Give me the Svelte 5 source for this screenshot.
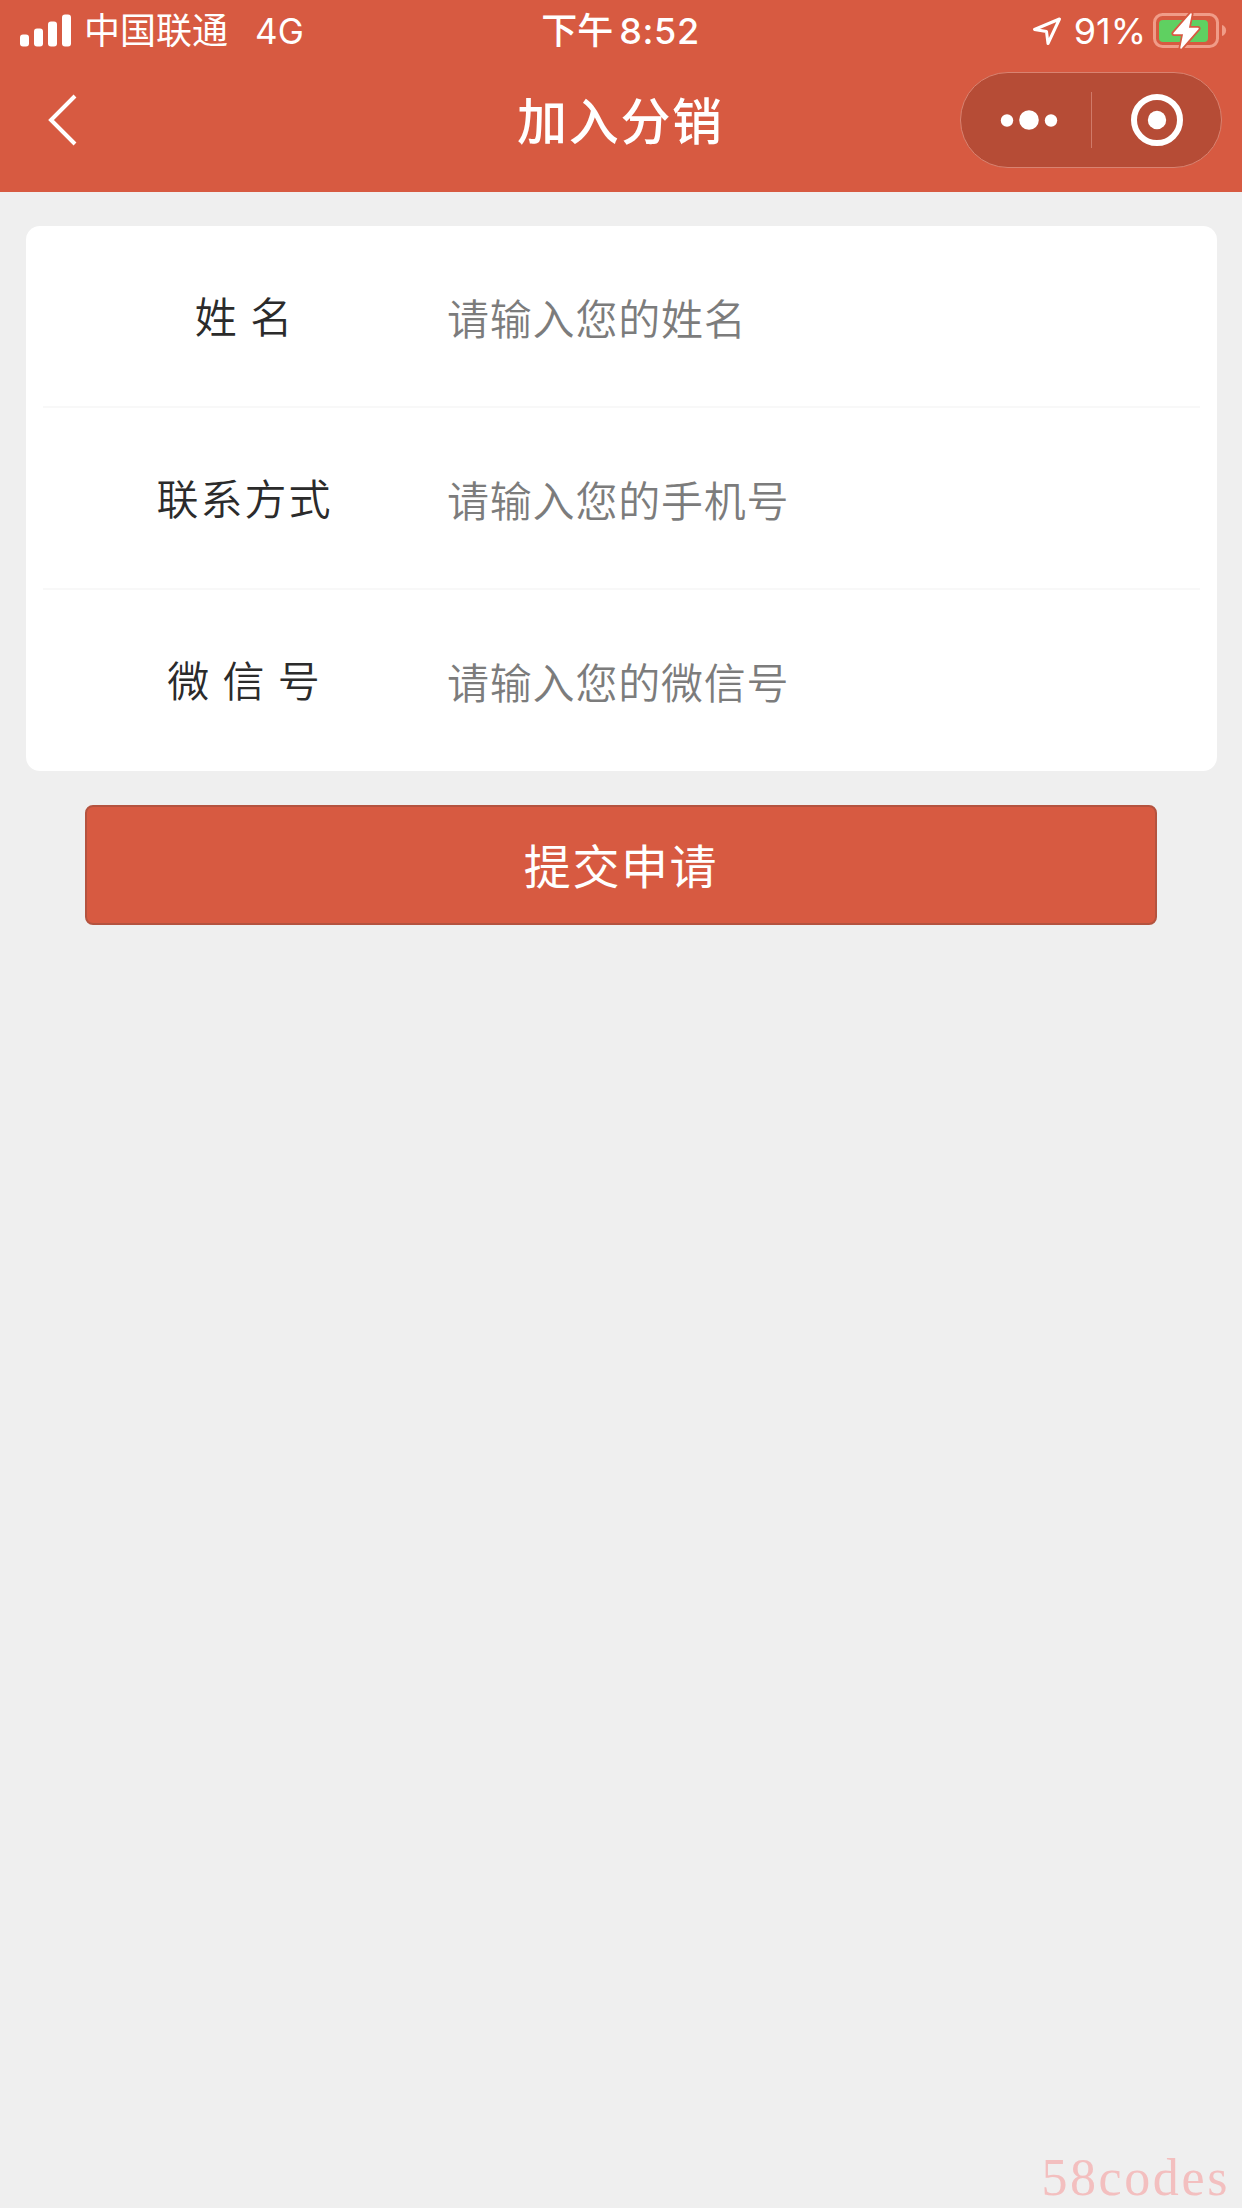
<script lang="ts">
  let fields = $state([
    { name: 'realname', label: '姓 名', placeholder: '请输入您的姓名', value: '' },
    { name: 'mobile', label: '联系方式', placeholder: '请输入您的手机号', value: '' },
    { name: 'wechat', label: '微 信 号', placeholder: '请输入您的微信号', value: '' }
  ]);
</script>

<div class="page">
  <header>
    <div class="status">
      <div class="carrier">
        <svg class="signal" width="52" height="34" viewBox="0 0 52 34" fill="#fff">
          <rect x="0" y="20.5" width="9" height="12" rx="3" />
          <rect x="14" y="14.5" width="9" height="18" rx="3" />
          <rect x="28" y="7.5" width="9" height="25" rx="3" />
          <rect x="42" y="0.5" width="9" height="32" rx="3" />
        </svg>
        <span>中国联通</span>
        <span class="network">4G</span>
      </div>
      <div class="time"><span>下午</span><span class="clock">8:52</span></div>
      <div class="power">
        <svg class="locate" width="30" height="30" viewBox="0 0 30 30" fill="none" stroke="#fff" stroke-width="3" stroke-linejoin="round">
          <path d="M27.5 3 L2.5 13.5 L14.5 15.5 L16 27.5 Z" />
        </svg>
        <span>91%</span>
        <svg class="battery" width="76" height="38" viewBox="0 0 76 38">
          <rect x="1.5" y="2.5" width="63" height="32" rx="8" fill="none" stroke="#f09c88" stroke-width="3" />
          <path d="M69 13 C74.5 14.5 74.5 22.5 69 24 Z" fill="#f09c88" />
          <rect x="6" y="8" width="49" height="22" rx="4" fill="#5fd061" />
          <path d="M38 2 L21 21.5 H31 L28 36 L45 16.5 H35 Z" fill="#fff" stroke="#d75a41" stroke-width="5" stroke-linejoin="round" />
          <path d="M38 2 L21 21.5 H31 L28 36 L45 16.5 H35 Z" fill="#fff" stroke="#fff" stroke-width="1.5" stroke-linejoin="round" />
        </svg>
      </div>
    </div>

    <div class="nav">
      <button class="back" aria-label="返回">
        <svg width="30" height="54" viewBox="0 0 30 54" fill="none" stroke="#fff" stroke-width="4">
          <path d="M27 3 L3 27 L27 51" />
        </svg>
      </button>
      <h1>加入分销</h1>
      <div class="capsule">
        <svg width="260" height="94" viewBox="0 0 260 94" fill="#fff">
          <circle cx="46" cy="47.5" r="6.2" />
          <circle cx="68" cy="47" r="9.8" />
          <circle cx="90" cy="47.5" r="6.2" />
          <rect x="130" y="19" width="1" height="56" fill="#d07a69" />
          <circle cx="196" cy="47" r="23" fill="none" stroke="#fff" stroke-width="6" />
          <circle cx="196" cy="47" r="9.2" />
        </svg>
      </div>
    </div>
  </header>

  <form>
    <div class="card">
      {#each fields as field}
        <label class="row">
          <span class="label">{field.label}</span>
          <input name={field.name} placeholder={field.placeholder} bind:value={field.value} />
        </label>
      {/each}
    </div>
    <button type="button" class="submit">提交申请</button>
  </form>

  <footer>58codes</footer>
</div>

<style>
  :global(body) { background: #efefef; }
  .page {
    box-sizing: border-box;
    width: 1242px;
    height: 2208px;
    display: flex;
    flex-direction: column;
    overflow: hidden;
    background: #efefef;
    font-family: 'Noto Sans CJK SC', sans-serif;
  }
  header { height: 192px; background: #d75a41; color: #fff; }
  svg { display: block; flex: none; }

  .status {
    display: grid;
    grid-template-columns: 1fr auto 1fr;
    align-items: center;
    height: 62px;
    padding: 0 13px 0 20px;
    font-family: Inter, 'Noto Sans CJK SC', sans-serif;
    font-size: 36px;
    line-height: 62px;
    white-space: nowrap;
  }
  .carrier, .time, .power { display: flex; align-items: center; }
  .signal { margin-right: 12px; }
  .network { margin-left: 27px; font-size: 35px; }
  .time { margin-right: 8px; font-weight: 500; }
  .clock { margin-left: 6px; font-size: 36px; letter-spacing: 0.6px; }
  .power { justify-content: flex-end; font-size: 36px; }
  .locate { margin-right: 12px; }
  .battery { margin-left: 7px; }

  .nav {
    display: grid;
    grid-template-columns: 469px auto 1fr;
    align-items: center;
    height: 116px;
    padding: 0 20px 0 48px;
  }
  .back { justify-self: start; border: 0; padding: 0; background: none; }
  h1 { margin: 0 0 4px; font-size: 50px; font-weight: 500; letter-spacing: 1.7px; line-height: 72px; }
  .capsule {
    justify-self: end;
    border: 1px solid #d98371;
    border-radius: 48px;
    background: #b64c36;
  }

  form { flex: 1; padding: 34px 25px 0 26px; }
  .card { padding: 0 17px; border-radius: 14px; background: #fff; }
  .row {
    box-sizing: border-box;
    display: flex;
    align-items: center;
    height: 182px;
    padding-bottom: 4px;
    border-bottom: 2px solid #f8f8f8;
    font-size: 42px;
    font-weight: 350;
  }
  .row:last-child { height: 181px; padding-bottom: 5px; border-bottom: 0; }
  .label { width: 404px; color: #2b2b2b; letter-spacing: 2px; text-align: center; text-indent: -1px; white-space: pre; }
  input {
    flex: 1;
    min-width: 0;
    height: 80px;
    margin-top: 4px;
    padding: 0;
    border: 0;
    outline: 0;
    background: none;
    font: inherit;
    letter-spacing: 0.8px;
  }
  input::placeholder { color: #7c7c7c; opacity: 1; }
  .submit {
    display: block;
    width: 1072px;
    height: 120px;
    margin: 34px auto 0 59px;
    padding: 0 0 3px;
    border: 2px solid #b4533f;
    border-radius: 8px;
    background: #d75a41;
    color: #fff;
    font: inherit;
    font-size: 47px;
    letter-spacing: 1.6px;
  }

  footer {
    padding: 0 12px 0 0;
    color: #f3bfbf;
    font-family: 'Liberation Serif', serif;
    font-size: 52px;
    letter-spacing: 2.6px;
    line-height: 60px;
    text-align: right;
  }
</style>
